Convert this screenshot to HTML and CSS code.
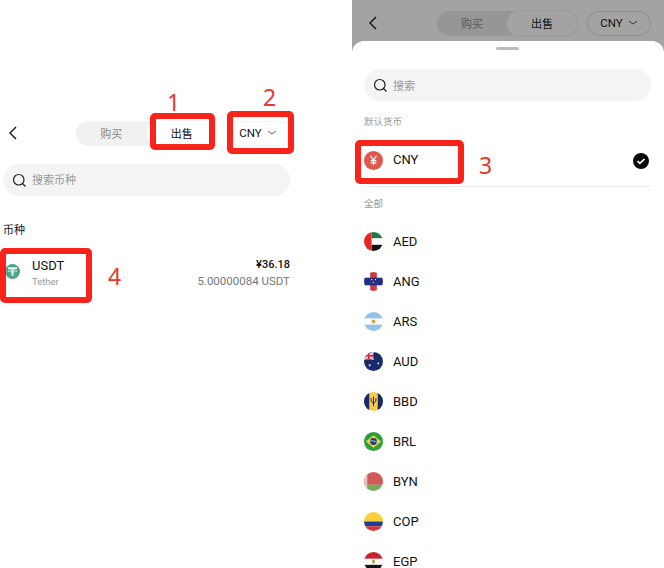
FILE: index.html
```html
<!DOCTYPE html>
<html lang="zh">
<head>
<meta charset="utf-8">
<title>币种</title>
<link rel="stylesheet" href="styles.css">
</head>
<body>
<div class="page">
  <section class="left">
    <header class="nav left-nav">
      <svg class="back" viewBox="0 0 10 16"><path d="M8 2 2 8l6 6" fill="none" stroke="#111" stroke-width="1.4"/></svg>
      <div class="seg">
        <span class="seg-off">购买</span>
        <span class="seg-on">出售</span>
      </div>
      <div class="cur">CNY <svg class="chev" viewBox="0 0 10 6"><path d="M1 1.2 5 4l4-2.8" fill="none" stroke="#666" stroke-width="1"/></svg></div>
    </header>
    <div class="search left-search">
      <svg class="mag" viewBox="0 0 16 16"><circle cx="7.2" cy="7.2" r="5.6" fill="none" stroke="#222" stroke-width="1.3"/><path d="m11.2 11.2 3.2 3.2" stroke="#222" stroke-width="1.3"/></svg>
      <span class="search-text">搜索币种</span>
    </div>
    <h2 class="coin-title">币种</h2>
    <div class="coin-row">
      <svg class="tether" viewBox="0 0 16 16"><circle cx="8" cy="8" r="8" fill="#4aa58a"/><path d="M3.2 3.4h9.600v1.900H9.100v7.300H6.900V5.300H3.200z" fill="#e9f5f0"/><ellipse cx="8" cy="7.300" rx="5" ry="1.100" fill="none" stroke="#e9f5f0" stroke-width=".7"/></svg>
      <div class="coin-name"><span class="coin-sym">USDT</span><small>Tether</small></div>
      <div class="coin-val"><b>¥36.18</b><span>5.00000084 USDT</span></div>
    </div>
  </section>
  <section class="right">
    <header class="nav right-nav">
      <svg class="back" viewBox="0 0 10 16"><path d="M8 2 2 8l6 6" fill="none" stroke="#111" stroke-width="1.4"/></svg>
      <div class="seg seg-dim">
        <span class="seg-off">购买</span>
        <span class="seg-on">出售</span>
      </div>
      <div class="cur cur-dim">CNY <svg class="chev" viewBox="0 0 10 6"><path d="M1 1.2 5 4l4-2.8" fill="none" stroke="#333" stroke-width="1"/></svg></div>
    </header>
    <div class="sheet">
      <div class="handle"></div>
      <div class="search sheet-search">
        <svg class="mag" viewBox="0 0 16 16"><circle cx="7.2" cy="7.200" r="5.600" fill="none" stroke="#222" stroke-width="1.300"/><path d="m11.200 11.200 3.200 3.200" stroke="#222" stroke-width="1.300"/></svg>
        <span>搜索</span>
      </div>
      <div class="label label-default">默认货币</div>
      <div class="row row-default">
        <svg class="flag" viewBox="0 0 20 20"><circle cx="10" cy="10" r="10" fill="#e0574c"/><path d="M6.800 5 10 9.600 13.200 5M10 9.600V15M7 10.200h6M7 12.400h6" fill="none" stroke="#fff" stroke-width="1.300"/></svg>
        <span class="code code-default">CNY</span>
        <svg class="check" viewBox="0 0 16 16"><circle cx="8" cy="8" r="8" fill="#0a0a0a"/><path d="m4.500 8.200 2.400 2.200 4.600-4.400" fill="none" stroke="#fff" stroke-width="1.700"/></svg>
      </div>
      <div class="label label-all">全部</div>
      <ul class="list">
        <li class="row"><svg class="flag" viewBox="0 0 20 20"><defs><clipPath id="c1"><circle cx="10" cy="10" r="10"/></clipPath></defs><g clip-path="url(#c1)"><rect width="20" height="20" fill="#fff"/><rect x="8" width="12" height="6.500" fill="#1f7a45"/><rect x="8" y="13.500" width="12" height="6.500" fill="#111"/><rect width="8" height="20" fill="#e8262a"/></g></svg><span class="code">AED</span></li>
        <li class="row"><svg class="flag" viewBox="0 0 20 20"><defs><clipPath id="c2"><circle cx="10" cy="10" r="10"/></clipPath></defs><g clip-path="url(#c2)"><rect width="20" height="20" fill="#fff"/><rect y="6" width="20" height="8" fill="#1d2f87"/><rect x="6.500" width="7" height="20" fill="#d23a42"/><rect x="6.500" y="6" width="7" height="8" fill="#1d2f87"/><circle cx="8" cy="8" r=".7" fill="#fff"/><circle cx="12" cy="8" r=".7" fill="#fff"/><circle cx="10" cy="11" r=".7" fill="#fff"/></g></svg><span class="code">ANG</span></li>
        <li class="row"><svg class="flag" viewBox="0 0 20 20"><defs><clipPath id="c3"><circle cx="10" cy="10" r="10"/></clipPath></defs><g clip-path="url(#c3)"><rect width="20" height="20" fill="#8fc3ea"/><rect y="6.700" width="20" height="6.600" fill="#fff"/><circle cx="10" cy="10" r="2" fill="#d9a24a"/></g></svg><span class="code">ARS</span></li>
        <li class="row"><svg class="flag" viewBox="0 0 20 20"><defs><clipPath id="c4"><circle cx="10" cy="10" r="10"/></clipPath></defs><g clip-path="url(#c4)"><rect width="20" height="20" fill="#1a2a6c"/><rect width="10" height="8" fill="#e9808f"/><path d="M0 0 10 8M10 0 0 8" stroke="#fff" stroke-width="1.200"/><path d="M5 0v8M0 4h10" stroke="#d8243c" stroke-width="1.500"/><circle cx="15" cy="12" r=".9" fill="#fff"/><circle cx="6" cy="14" r="1" fill="#fff"/></g></svg><span class="code">AUD</span></li>
        <li class="row"><svg class="flag" viewBox="0 0 20 20"><defs><clipPath id="c5"><circle cx="10" cy="10" r="10"/></clipPath></defs><g clip-path="url(#c5)"><rect width="20" height="20" fill="#f7c948"/><rect width="5.500" height="20" fill="#13296b"/><rect x="14.500" width="5.500" height="20" fill="#13296b"/><path d="M10 5v10M7.400 6.500c0 4 1 5 2.600 5s2.600-1 2.600-5" fill="none" stroke="#222" stroke-width="1"/></g></svg><span class="code">BBD</span></li>
        <li class="row"><svg class="flag" viewBox="0 0 20 20"><defs><clipPath id="c6"><circle cx="10" cy="10" r="10"/></clipPath></defs><g clip-path="url(#c6)"><rect width="20" height="20" fill="#2f9e3f"/><path d="M10 3.500 18 10l-8 6.500L2 10z" fill="#f5d327"/><circle cx="10" cy="10" r="3.600" fill="#1c3f8c"/><path d="M6.600 9.400c2.500-.4 4.800.2 6.800 1.400" stroke="#fff" stroke-width=".7" fill="none"/></g></svg><span class="code">BRL</span></li>
        <li class="row"><svg class="flag" viewBox="0 0 20 20"><defs><clipPath id="c7"><circle cx="10" cy="10" r="10"/></clipPath></defs><g clip-path="url(#c7)"><rect width="20" height="13.500" fill="#cf5a5a"/><rect y="13.500" width="20" height="6.500" fill="#6fae5c"/><rect width="3.500" height="20" fill="#e9c4c4"/></g></svg><span class="code">BYN</span></li>
        <li class="row"><svg class="flag" viewBox="0 0 20 20"><defs><clipPath id="c8"><circle cx="10" cy="10" r="10"/></clipPath></defs><g clip-path="url(#c8)"><rect width="20" height="10" fill="#f7d23e"/><rect y="10" width="20" height="5" fill="#1c3f94"/><rect y="15" width="20" height="5" fill="#d8343f"/></g></svg><span class="code">COP</span></li>
        <li class="row"><svg class="flag" viewBox="0 0 20 20"><defs><clipPath id="c9"><circle cx="10" cy="10" r="10"/></clipPath></defs><g clip-path="url(#c9)"><rect width="20" height="20" fill="#fff"/><rect width="20" height="7" fill="#c8202c"/><rect y="13.500" width="20" height="6.500" fill="#111"/><rect x="8.800" y="8" width="2.400" height="4" fill="#b58a2e"/></g></svg><span class="code">EGP</span></li>
      </ul>
    </div>
  </section>
</div>
<div class="mark box1"></div><div class="mark box2"></div><div class="mark box3"></div><div class="mark box4"></div>
<span class="num n1">1</span><span class="num n2">2</span><span class="num n3">3</span><span class="num n4">4</span>
</body>
</html>
```
FILE: styles.css
```css
* { box-sizing: border-box; }
html, body { margin: 0; padding: 0; }
body { width: 664px; height: 568px; overflow: hidden; position: relative; background: #fff;
  font-family: Roboto, "Noto Sans CJK SC", sans-serif; color: #111; }
.page { display: flex; justify-content: space-between; height: 568px; }
.left { width: 293px; padding-top: 121px; }
.right { width: 312px; height: 568px; background: #a3a3a3; overflow: hidden; }
.nav { display: flex; align-items: center; height: 25px; }
.left-nav { padding: 0 0 0 8px; }
.left-nav .back { margin-top: -1px; }
.left-nav .seg span { padding-bottom: 2px; }
.left-nav .cur { padding-bottom: 1px; }
.right-nav { height: 41px; padding: 5px 0 0 16px; }
.back { width: 10px; height: 16px; flex: none; }
.seg { display: flex; width: 141px; height: 25px; border-radius: 13px; background: #f1f1f1; font-size: 11px; margin-left: 58px; }
.seg span { flex: 1; display: flex; align-items: center; justify-content: center; border-radius: 13px; }
.seg-off { color: #8a8a8a; }
.seg-on { background: #fff; color: #111; }
.cur { width: 64px; height: 25px; margin-left: 12px; padding-right: 6px; border: 1px solid #f2f2f2; border-radius: 13px; font-size: 11.5px;
  display: flex; align-items: center; justify-content: center; gap: 5px; }
.chev { width: 10px; height: 6px; }
.seg-dim { background: #969696; margin-left: 59px; width: 140px; color: #333; }
.seg-dim .seg-off { color: #5c5c5c; }
.seg-dim .seg-on { background: #a3a3a3; color: #111; box-shadow: 0 0 0 1px #9a9a9a; }
.cur-dim { border-color: #8f8f8f; margin-left: 10px; padding-right: 0; }
.search { display: flex; align-items: center; gap: 5px; height: 32px; border-radius: 16px; background: #f4f4f4; padding-left: 9px; font-size: 11px; color: #999; }
.search-text { padding-bottom: 2px; }
.mag { width: 15px; height: 15px; flex: none; }
.left-search { margin: 18px 3px 0 3px; }
.coin-title { margin: 27px 0 0 3px; font-size: 11px; font-weight: 400; line-height: 16px; }
.coin-row { display: flex; align-items: center; margin-top: 14px; padding: 0 3px 0 5px; height: 40px; }
.tether { width: 15px; height: 15px; flex: none; margin-top: -4px; }
.coin-name { display: flex; flex-direction: column; margin-left: 12px; flex: 1; }
.coin-sym { font-size: 13px; line-height: 17px; }
.coin-name small { font-size: 9.5px; color: #999; line-height: 14px; margin-top: 1px; }
.coin-val { display: flex; flex-direction: column; align-items: flex-end; }
.coin-val b { font-size: 11px; font-weight: 500; line-height: 16px; }
.coin-val span { font-size: 11.5px; color: #777; line-height: 16px; }
.sheet { height: 527px; background: #fff; border-radius: 12px 12px 0 0; padding: 6px 13px 0 12px; }
.handle { width: 23px; height: 3px; background: #bbb; border-radius: 2px; margin: 0 auto; }
.sheet-search { margin-top: 19px; }
.label { font-size: 9.5px; color: #9a9a9a; line-height: 14px; }
.label-default { margin-top: 14px; }
.row { display: flex; align-items: center; height: 40px; font-size: 13px; }
.row-default { margin-top: 14px; height: 44px; border-bottom: 1px solid #ececec; padding-bottom: 8px; }
.flag { width: 19px; height: 19px; flex: none; margin-right: 10px; }
.code { flex: 1; }
.code-default { padding-bottom: 2px; }
.check { width: 16px; height: 16px; margin-right: 2px; }
.label-all { margin-top: 10px; }
.list { list-style: none; margin: 10px 0 0; padding: 0; }
.mark { position: absolute; border: 6px solid #f9231a; border-radius: 5px; }
.box1 { left: 150px; top: 113px; width: 65px; height: 37px; }
.box2 { left: 227px; top: 111px; width: 67px; height: 43px; }
.box3 { left: 355px; top: 140px; width: 109px; height: 44px; }
.box4 { left: 0; top: 248px; width: 92px; height: 55px; }
.num { position: absolute; color: #e8382e; font-family: "Noto Sans", sans-serif; font-size: 23px; line-height: 30px; }
.n1 { left: 167px; top: 87px; }
.n2 { left: 263px; top: 82px; }
.n3 { left: 479px; top: 150px; }
.n4 { left: 108px; top: 261px; }
```
